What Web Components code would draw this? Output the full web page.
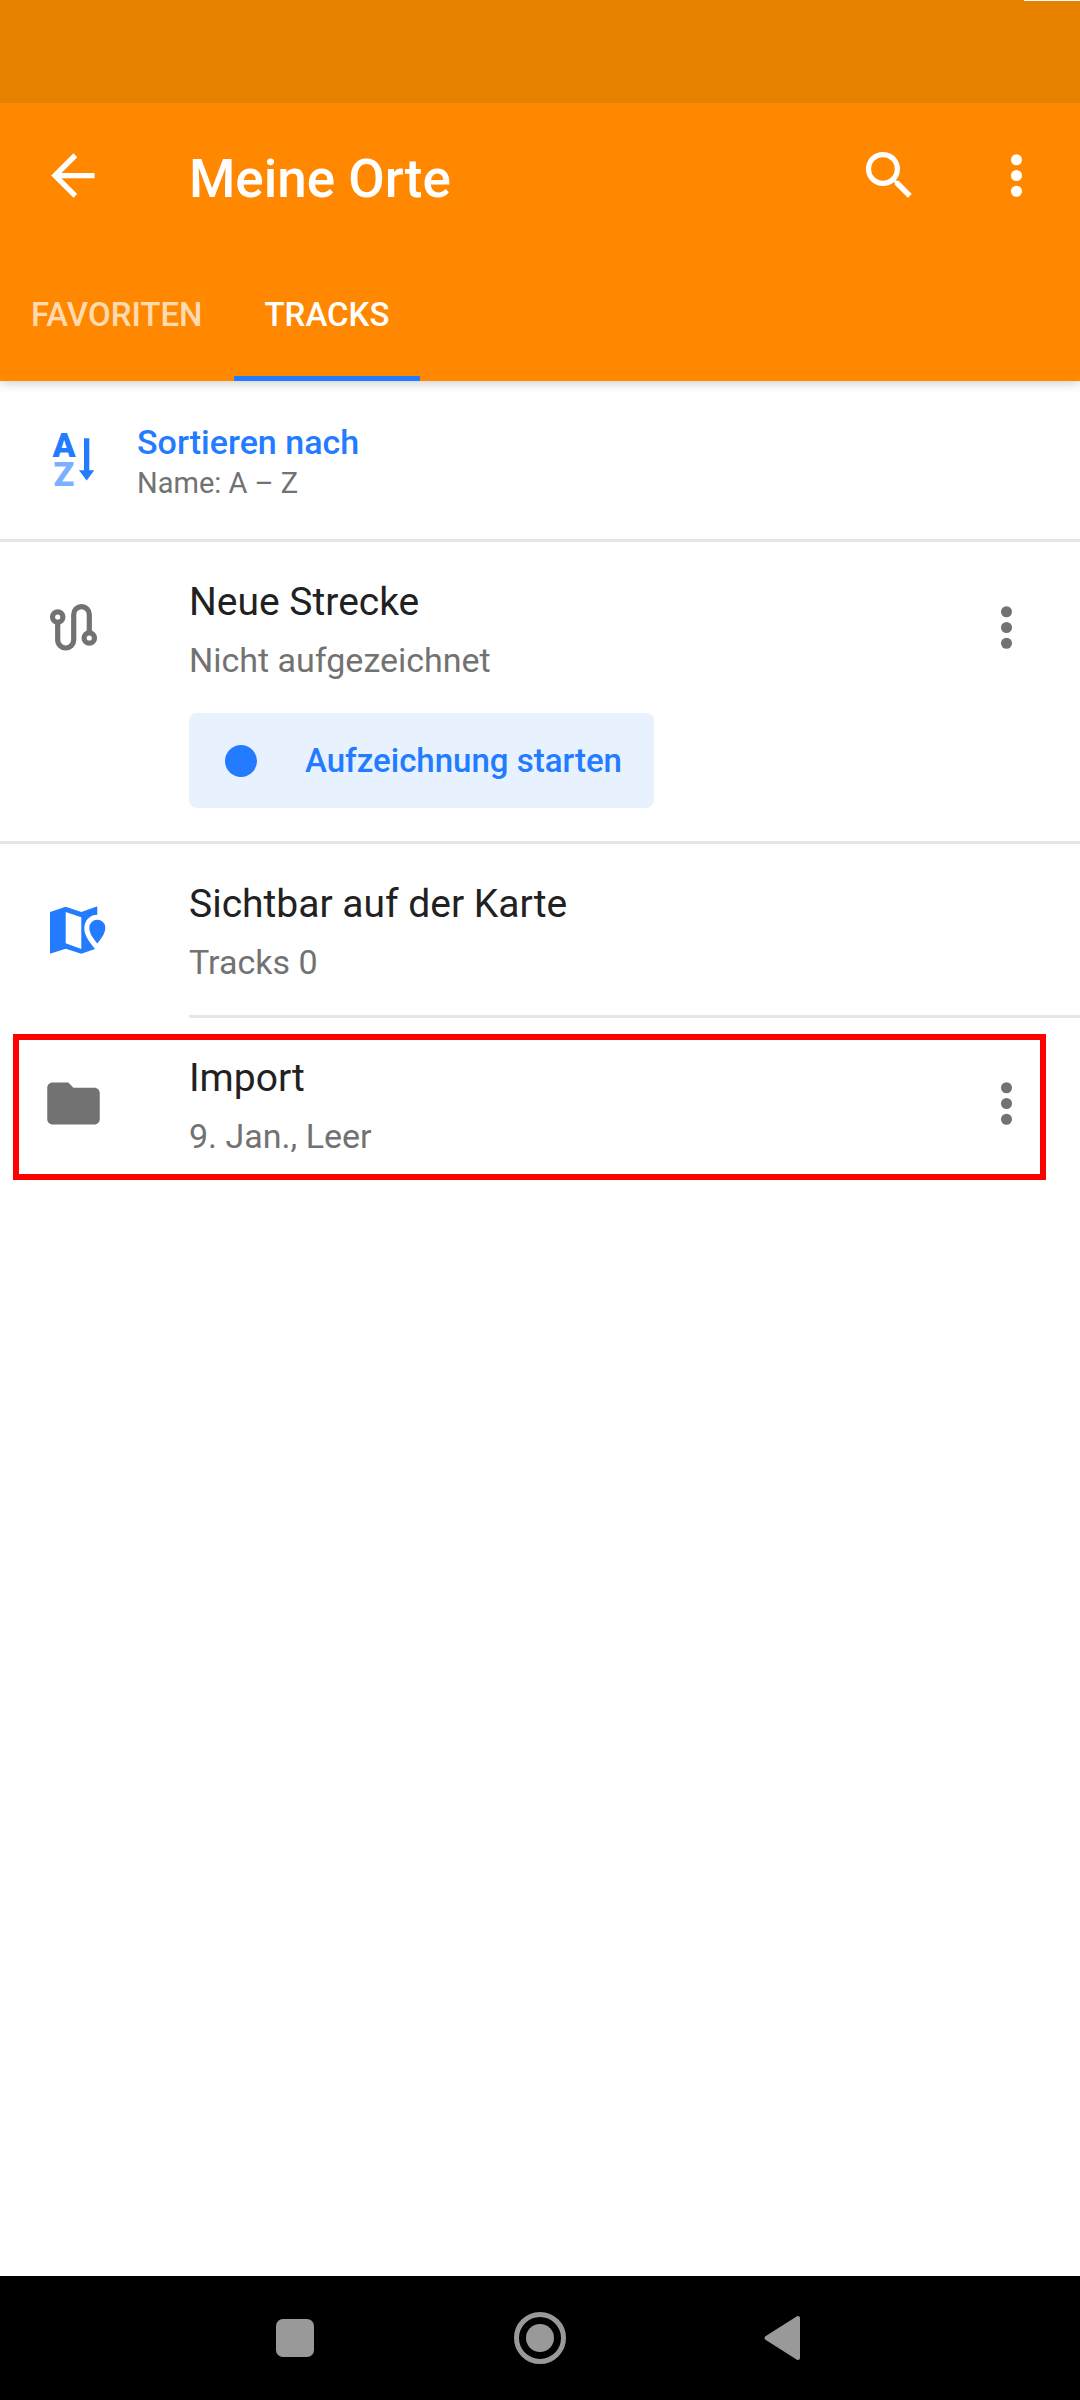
<!DOCTYPE html>
<html lang="de">
<head>
<meta charset="utf-8">
<title>Meine Orte</title>
<style>
  html, body { margin: 0; }
  body { font-family: Roboto, "Liberation Sans", sans-serif; background: #fff; color: #212121; }
</style>
</head>
<body>
<places-app></places-app>

<template id="t-app">
  <style>
    :host { display: flex; flex-direction: column; min-height: 100vh; }
    main { flex: 1; }
  </style>
  <app-header heading="Meine Orte"></app-header>
  <main>
    <sort-row><span slot="title">Sortieren nach</span><span slot="value">Name: A – Z</span></sort-row>
    <track-item icon="route" menu divider="full">
      <span slot="title">Neue Strecke</span>
      <span slot="info">Nicht aufgezeichnet</span>
      <record-button slot="action">Aufzeichnung starten</record-button>
    </track-item>
    <track-item icon="map" divider="inset">
      <span slot="title">Sichtbar auf der Karte</span>
      <span slot="info">Tracks 0</span>
    </track-item>
    <track-item icon="folder" menu marked>
      <span slot="title">Import</span>
      <span slot="info">9. Jan., Leer</span>
    </track-item>
  </main>
  <system-nav></system-nav>
</template>

<template id="t-header">
  <style>
    :host { display: block; position: relative; background: #ff8800; color: #fff; box-shadow: 0 2px 10px rgba(0,0,0,.2); }
    .status { height: 103px; background: #e68200; display: flex; justify-content: flex-end; align-items: flex-start; }
    .status i { width: 56px; height: 1px; background: #fff; }
    .bar { display: flex; align-items: center; height: 147px; padding: 0 32px 2px 42px; box-sizing: border-box; }
    h1 { flex: 1; margin: 0; padding: 7px 0 0 84px; font-size: 53px; line-height: 62px; font-weight: 500; }
    button { font: inherit; color: inherit; background: none; border: 0; padding: 0; display: block; }
    .actions { display: flex; gap: 64px; }
    .tabs { display: flex; height: 131px; }
    .tabs button { box-sizing: border-box; padding: 2px 31px 0; border-bottom: 5px solid transparent; font-size: 33px; font-weight: 500; color: rgba(255,255,255,.7); }
    .tabs button[aria-selected=true] { color: #fff; border-color: #237bff; }
  </style>
  <div class="status"><i></i></div>
  <div class="bar">
    <button aria-label="Zurück"><app-icon name="back"></app-icon></button>
    <h1></h1>
    <div class="actions">
      <button aria-label="Suchen"><app-icon name="search"></app-icon></button>
      <button aria-label="Mehr"><app-icon name="more"></app-icon></button>
    </div>
  </div>
  <div class="tabs" role="tablist">
    <button role="tab" aria-selected="false">FAVORITEN</button>
    <button role="tab" aria-selected="true">TRACKS</button>
  </div>
</template>

<template id="t-sort">
  <style>
    :host { display: block; border-bottom: 3px solid #e6e6e6; }
    button { display: flex; align-items: center; gap: 32px; width: 100%; height: 158px; padding: 0 42px; border: 0; background: none; font: inherit; text-align: left; color: #237bff; }
    .text { display: flex; flex-direction: column; gap: 3px; padding-top: 3px; }
    .title { font-size: 34px; line-height: 40px; font-weight: 500; }
    .value { font-size: 29px; line-height: 36px; color: #727272; }
  </style>
  <button>
    <app-icon name="sort"></app-icon>
    <span class="text">
      <span class="title"><slot name="title"></slot></span>
      <span class="value"><slot name="value"></slot></span>
    </span>
  </button>
</template>

<template id="t-item">
  <style>
    :host { display: block; position: relative; }
    .row { display: flex; align-items: flex-start; padding: 0 42px; }
    .icon, .menu { padding: 54px 0; color: #727272; }
    :host([icon=map]) .icon { color: #237bff; }
    .body { flex: 1; padding: 36px 0 31px 84px; }
    .title { font-size: 39px; line-height: 48px; color: #212121; }
    .info { margin-top: 12px; font-size: 34px; line-height: 44px; color: #727272; }
    ::slotted([slot=action]) { margin: 31px 0 2px; }
    button { display: none; border: 0; padding: 0; background: none; color: inherit; }
    :host([menu]) button { display: block; }
    hr { display: none; border: 0; height: 3px; margin: 0; background: #e6e6e6; }
    :host([divider]) hr { display: block; }
    :host([divider=inset]) hr { margin-left: 189px; }
    :host([marked])::after { content: ""; position: absolute; inset: 16px 34px 9px 13px; border: 6px solid #f00; pointer-events: none; }
  </style>
  <div class="row">
    <app-icon class="icon"></app-icon>
    <div class="body">
      <div class="title"><slot name="title"></slot></div>
      <div class="info"><slot name="info"></slot></div>
      <slot name="action"></slot>
    </div>
    <div class="menu"><button aria-label="Optionen"><app-icon name="more"></app-icon></button></div>
  </div>
  <hr>
</template>

<template id="t-record">
  <style>
    :host { display: block; }
    button { display: flex; align-items: center; gap: 48px; height: 95px; padding: 0 32px 0 36px; border: 0; border-radius: 8px; background: #e8f2ff; color: #237bff; font: inherit; font-size: 33px; font-weight: 500; }
    i { width: 32px; height: 32px; border-radius: 50%; background: currentColor; }
  </style>
  <button><i></i><slot></slot></button>
</template>

<template id="t-nav">
  <style>
    :host { display: flex; justify-content: center; gap: 182px; align-items: center; height: 124px; background: #000; color: #999; }
    button { border: 0; padding: 0; background: none; color: inherit; }
  </style>
  <button aria-label="Letzte Apps"><app-icon name="recents"></app-icon></button>
  <button aria-label="Startseite"><app-icon name="home"></app-icon></button>
  <button aria-label="Zurück"><app-icon name="navback"></app-icon></button>
</template>

<script>
const shadow = (el, id) => {
  const root = el.attachShadow({ mode: 'open' });
  root.append(document.getElementById(id).content.cloneNode(true));
  return root;
};

/* Each icon: the size of its grid, then its shapes. */
const ICONS = {
  back: [24, '<path d="M20 11H7.4l6-6L12 3.5 3.5 12l8.5 8.5 1.41-1.41L7.4 13H20z"/>'],
  search: [24, '<path d="M15.5 14h-.79l-.28-.27A6.47 6.47 0 0 0 16 9.5 6.5 6.5 0 1 0 9.5 16c1.61 0 3.09-.59 4.23-1.57l.27.28v.79l5 4.99L20.49 19zM9.5 14A4.5 4.5 0 1 1 9.5 5a4.5 4.5 0 0 1 0 9z"/>'],
  more: [24, '<circle cx="12" cy="6" r="2.1"/><circle cx="12" cy="12" r="2.1"/><circle cx="12" cy="18" r="2.1"/>'],
  folder: [24, '<path d="M10 4H4c-1.1 0-2 .9-2 2v12c0 1.1.9 2 2 2h16c1.1 0 2-.9 2-2V8c0-1.1-.9-2-2-2h-8z"/>'],
  sort: [63, '<linearGradient id="fade" gradientUnits="userSpaceOnUse" x1="0" y1="0" x2="0" y2="60"><stop offset=".5" stop-color="#237bff"/><stop offset=".5" stop-color="#7bb0ff"/></linearGradient><text font-family="Roboto" font-weight="900" font-size="34" text-anchor="middle" fill="url(#fade)" x="22 22" y="28 57">AZ</text><path d="M42 9.3h5.3v32h5L44.7 51.5 37 41.3h5z"/>'],
  route: [63, '<g fill="none" stroke="currentColor" stroke-width="5.2"><circle cx="15.7" cy="21" r="5.2"/><circle cx="47.3" cy="42" r="5.2"/><path d="M15.7 26V44a8 8 0 0 0 16 0V18.4a7.8 7.8 0 0 1 15.6 0V37"/></g>'],
  map: [63, '<path fill-rule="evenodd" d="M8 14 23.7 8.7 39.3 14 54 8.7Q55.3 8.3 55.3 9.5V16.7C47.5 16.7 42.3 23 42.3 30.3C42.3 37.5 47 43.5 53 51L39.3 55.7 23.7 50.7 8 55.7zM23.7 14V45.3L39.3 51V19.3z"/><path d="M55.3 21.7a8 8 0 0 1 8 8c0 6-4.5 11.2-8 15.7-3.5-4.5-8-9.7-8-15.7a8 8 0 0 1 8-8z"/>'],
  recents: [63, '<rect x="12" y="12" width="38" height="38" rx="7"/>'],
  home: [63, '<circle cx="31" cy="31" r="23.5" fill="none" stroke="currentColor" stroke-width="5"/><circle cx="31" cy="31" r="14"/>'],
  navback: [63, '<path d="M12.5 31 44 11V51z" stroke="currentColor" stroke-width="4" stroke-linejoin="round"/>'],
};

class AppIcon extends HTMLElement {
  static observedAttributes = ['name'];
  constructor() { super(); this.attachShadow({ mode: 'open' }); }
  attributeChangedCallback(_, __, name) {
    const [grid, shape] = ICONS[name];
    this.shadowRoot.innerHTML = `<style>:host{display:block;flex:none}svg{display:block;width:63px;height:63px;overflow:visible;fill:currentColor}</style><svg viewBox="0 0 ${grid} ${grid}" aria-hidden="true">${shape}</svg>`;
  }
}
class AppHeader extends HTMLElement {
  constructor() { super(); shadow(this, 't-header').querySelector('h1').textContent = this.getAttribute('heading'); }
}
class SortRow extends HTMLElement { constructor() { super(); shadow(this, 't-sort'); } }
class TrackItem extends HTMLElement {
  constructor() { super(); shadow(this, 't-item').querySelector('.icon').setAttribute('name', this.getAttribute('icon')); }
}
class RecordButton extends HTMLElement { constructor() { super(); shadow(this, 't-record'); } }
class SystemNav extends HTMLElement { constructor() { super(); shadow(this, 't-nav'); } }
class PlacesApp extends HTMLElement { constructor() { super(); shadow(this, 't-app'); } }

customElements.define('places-app', PlacesApp);
customElements.define('app-header', AppHeader);
customElements.define('sort-row', SortRow);
customElements.define('track-item', TrackItem);
customElements.define('record-button', RecordButton);
customElements.define('system-nav', SystemNav);
customElements.define('app-icon', AppIcon);
</script>
</body>
</html>
